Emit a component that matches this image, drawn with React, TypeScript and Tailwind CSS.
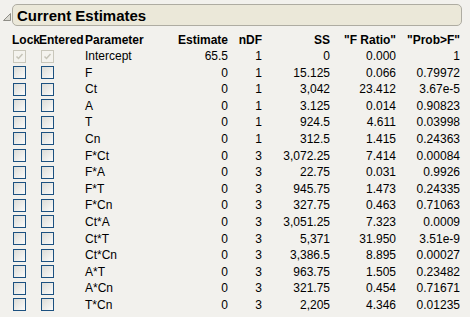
type Row = {
  name: string;
  est: string;
  df: string;
  ss: string;
  fr: string;
  p: string;
  locked?: boolean;
};

const rows: Row[] = [
  { name: "Intercept", est: "65.5", df: "1", ss: "0", fr: "0.000", p: "1", locked: true },
  { name: "F", est: "0", df: "1", ss: "15.125", fr: "0.066", p: "0.79972" },
  { name: "Ct", est: "0", df: "1", ss: "3,042", fr: "23.412", p: "3.67e-5" },
  { name: "A", est: "0", df: "1", ss: "3.125", fr: "0.014", p: "0.90823" },
  { name: "T", est: "0", df: "1", ss: "924.5", fr: "4.611", p: "0.03998" },
  { name: "Cn", est: "0", df: "1", ss: "312.5", fr: "1.415", p: "0.24363" },
  { name: "F*Ct", est: "0", df: "3", ss: "3,072.25", fr: "7.414", p: "0.00084" },
  { name: "F*A", est: "0", df: "3", ss: "22.75", fr: "0.031", p: "0.9926" },
  { name: "F*T", est: "0", df: "3", ss: "945.75", fr: "1.473", p: "0.24335" },
  { name: "F*Cn", est: "0", df: "3", ss: "327.75", fr: "0.463", p: "0.71063" },
  { name: "Ct*A", est: "0", df: "3", ss: "3,051.25", fr: "7.323", p: "0.0009" },
  { name: "Ct*T", est: "0", df: "3", ss: "5,371", fr: "31.950", p: "3.51e-9" },
  { name: "Ct*Cn", est: "0", df: "3", ss: "3,386.5", fr: "8.895", p: "0.00027" },
  { name: "A*T", est: "0", df: "3", ss: "963.75", fr: "1.505", p: "0.23482" },
  { name: "A*Cn", est: "0", df: "3", ss: "321.75", fr: "0.454", p: "0.71671" },
  { name: "T*Cn", est: "0", df: "3", ss: "2,205", fr: "4.346", p: "0.01235" },
];

const cols = "grid grid-cols-[28px_45px_90px_54px_34px_68px_66px_64px] items-center";

const Box = ({ disabled }: { disabled?: boolean }) => {
  if (disabled) {
    return (
      <div className="ml-[2px] w-[13px] h-[13px] border border-[#c9c7bb] bg-[#f4f3ee] flex items-center justify-center">
        <svg width="9" height="9" viewBox="0 0 9 9">
          <path d="M1.5 4.5 L3.5 6.5 L7.5 2" fill="none" stroke="#c6c4b8" strokeWidth="1.5" />
        </svg>
      </div>
    );
  }
  return (
    <div className="ml-[2px] w-[13px] h-[13px] border border-[#1c5180] bg-gradient-to-br from-[#dcdcd7] to-[#fbfbfa]" />
  );
};

export default function App() {
  return (
    <div
      className="w-[470px] h-[317px] bg-[#f2f1ed] text-black text-[12px] overflow-hidden"
      style={{ fontFamily: '"Liberation Sans", Arial, sans-serif' }}
    >
      <div className="flex items-center pt-[4px] pl-[3px]">
        <svg width="8" height="8" viewBox="0 0 8 8" className="mt-[4px] mr-[1px]">
          <polygon points="7.5,0.5 7.5,7.5 0.5,7.5" fill="#dcdbd3" stroke="#8e8d86" strokeWidth="1" />
        </svg>
        <div className="w-[450px] h-[22px] rounded-[5px] border border-[#aeaca2] bg-[#ebe8d9] flex items-center pl-[4px]">
          <span className="text-[15px] font-bold leading-none">Current Estimates</span>
        </div>
      </div>
      <div className="pl-[11px] mt-[5px]">
        <div className={`${cols} h-[16px] font-bold`}>
          <div className="pl-[1px]">Lock</div>
          <div>Entered</div>
          <div className="pl-[1px]">Parameter</div>
          <div className="text-right">Estimate</div>
          <div className="text-right">nDF</div>
          <div className="text-right">SS</div>
          <div className="text-right">"F Ratio"</div>
          <div className="text-right">"Prob&gt;F"</div>
        </div>
        {rows.map((r) => (
          <div key={r.name} className={`${cols} h-[16.6px]`}>
            <div>
              <Box disabled={r.locked} />
            </div>
            <div>
              <Box disabled={r.locked} />
            </div>
            <div className="pl-[1px]">{r.name}</div>
            <div className="text-right">{r.est}</div>
            <div className="text-right">{r.df}</div>
            <div className="text-right">{r.ss}</div>
            <div className="text-right">{r.fr}</div>
            <div className="text-right">{r.p}</div>
          </div>
        ))}
      </div>
    </div>
  );
}
